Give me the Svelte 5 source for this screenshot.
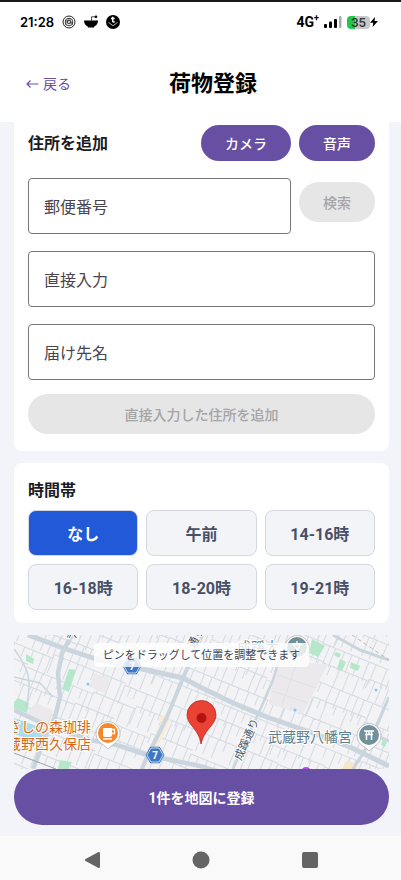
<script>
	const slots = ['なし', '午前', '14-16時', '16-18時', '18-20時', '19-21時'];

	let slot = $state('なし');
	let postcode = $state('');
	let address = $state('');
	let recipient = $state('');

	// side streets: rows across the map, blocks of parallel lanes between them
	function sideStreets() {
		let seed = 11;
		const rand = () => {
			seed = (seed * 16807) % 2147483647;
			return seed / 2147483647;
		};
		let d = '';
		for (let y = -170; y < 190; y += 19) {
			let x = -60;
			while (x < 450) {
				const block = 35 + rand() * 55;
				const top = y + Math.round(rand() * 6);
				d += `M${x.toFixed(1)} ${top}h${block.toFixed(1)}`;
				for (let lane = 0; lane < block; lane += 6 + rand() * 6) {
					const len = rand() > 0.2 ? 20 : 10;
					d += `M${(x + lane).toFixed(1)} ${top}v${len}`;
				}
				x += block;
			}
		}
		return d;
	}

	const streets = sideStreets();
</script>

<div class="screen">
	<div class="status">
		<div class="status__group">
			<span class="status__time">21:28</span>
			<svg width="14" height="14" viewBox="0 0 14 14" fill="none" stroke="#222">
				<circle cx="7" cy="7" r="6" />
				<circle cx="7" cy="7" r="3.8" stroke-width=".9" />
				<circle cx="7" cy="7" r="1.8" stroke-width=".9" />
				<path d="M3 10 7 3l4 7M3 5l8 4" stroke-width=".5" />
			</svg>
			<svg width="14" height="14" viewBox="0 0 14 14">
				<path d="M0 5.500h14c0 3.200-1.500 4.800-3.500 5.800l-.5 1.200H4l-.5-1.200C1.500 10.300 0 8.700 0 5.500Z" />
				<path d="M7.500 6V1.800h3.500" fill="none" stroke="#333" stroke-width=".9" />
				<circle cx="12" cy="1.800" r="1.300" />
			</svg>
			<svg width="14" height="14" viewBox="0 0 14 14">
				<circle cx="7" cy="7" r="7" />
				<path d="M6.700 1.800v4.200q0 1.200 2 .8M5 3.600h3.700" fill="none" stroke="#fff" stroke-width="1.500" />
				<path d="m2.500 7.500 4.500 3.200 4.500-3.200" fill="none" stroke="#fff" stroke-width=".7" />
			</svg>
		</div>
		<div class="status__group status__group--right">
			<span class="status__net">4G<sup>+</sup></span>
			<svg width="18" height="12" viewBox="0 0 18 12">
				<rect x="0" y="8" width="3" height="4" rx="1" />
				<rect x="5" y="5.500" width="3" height="6.500" rx="1" />
				<rect x="10" y="3" width="3" height="9" rx="1" />
				<rect x="15" y="0" width="2.500" height="12" rx="1" fill="#aaa" />
			</svg>
			<span class="battery">
				<span class="battery__level">35</span>
				<svg width="8" height="10" viewBox="0 0 8 10">
					<path d="M5 0 0 5.800h3.200L2.700 10 8 4H4.600Z" />
				</svg>
			</span>
		</div>
	</div>

	<header class="header">
		<button class="header__back" type="button">
			<svg width="13" height="10" viewBox="0 0 13 10" fill="none" stroke="currentColor" stroke-width="1.200">
				<path d="M12.500 5H1M4.500 1.500 1 5l3.500 3.500" />
			</svg>
			戻る
		</button>
		<h1>荷物登録</h1>
	</header>

	<main class="content">
		<section class="card card--address">
			<div class="card__head">
				<h2>住所を追加</h2>
				<button class="btn btn--camera" type="button">カメラ</button>
				<button class="btn btn--small" type="button">音声</button>
			</div>
			<div class="row">
				<input class="field" type="text" placeholder="郵便番号" aria-label="郵便番号" bind:value={postcode} />
				<button class="btn btn--small btn--search" type="button" disabled={!postcode}>検索</button>
			</div>
			<input class="field" type="text" placeholder="直接入力" aria-label="直接入力" bind:value={address} />
			<input class="field" type="text" placeholder="届け先名" aria-label="届け先名" bind:value={recipient} />
			<button class="btn btn--wide" type="button" disabled={!address}>直接入力した住所を追加</button>
		</section>

		<section class="card card--time">
			<h2>時間帯</h2>
			<div class="slots">
				{#each slots as name}
					<button
						class="slot"
						class:slot--active={slot === name}
						type="button"
						aria-pressed={slot === name}
						onclick={() => (slot = name)}>{name}</button
					>
				{/each}
			</div>
		</section>

		<section class="map">
			<svg class="map__canvas" viewBox="0 0 375 134" preserveAspectRatio="xMidYMid slice">
				<rect width="375" height="134" fill="#f3f2f4" />
				<path d={streets} transform="rotate(22)" fill="none" stroke="#d3dbe3" />

				<g fill="#ebe9eb">
					<path d="m262 27 52 2-25 50-34-10Z" />
					<path d="m21 68 18 7-6 13-22-7Z" />
					<path d="m80 38 17 6-6 14-16-6Z" />
				</g>
				<path d="m264 40 38 13M258 56l36 12M282 30l-14 40" fill="none" stroke="#dfe1e5" />
				<g fill="#b5e8ca">
					<path d="m12 19 8 5-1 5-7-3Z" />
					<path d="m55 34 7 1-7 22-7-3Z" />
					<path d="m4 63 11 5-2 10-13-5v-6Z" />
					<path d="m46 125 12 2-4 7H44Z" />
					<path d="m298 4 13 7-7 11-9-4Z" />
					<path d="m326 24 6 3-4 9-5-2Z" />
					<path d="m337 27 9 4-2 5-8-3Z" />
					<path d="m369 104 4 3-2 5-4-2Z" />
					<path d="m322 17 5 2-2 4-5-3Z" />
				</g>
				<path d="M153 82 139 114M146 83l8 3" fill="none" stroke="#f8ecd2" stroke-width="7" />
				<path d="m332 126 12 3-2 5h-14Z" fill="#f8e7c6" />
				<path d="m0 83 31 11-5 13L0 99Z" fill="#a6def0" />
				<g fill="#78cdf3">
					<circle cx="74" cy="49" r="1.500" />
					<circle cx="281" cy="75" r="1.500" />
					<circle cx="362" cy="55" r="1.500" />
				</g>

				<g fill="none" stroke="#cbd5dd" stroke-linejoin="round">
					<path d="M0 14q15 20 15 34T12 73M0 42l26 6 13 14M0 90l34 12" stroke-width="1.500" />
					<path d="m267 18-8 27-13 30-27 59" stroke-width="2.500" />
					<path d="m319 0 27 15 29 10M375 62l-22 50-14 22M346 94l29 12" stroke-width="3" />
					<path d="M58 0 48 18l-4 20 2 24-5 20-12 26-10 26" stroke-width="4.500" />
					<path d="m188 0-19 43-16 39-20 40-5 12" stroke-width="4" />
					<path d="m0 75 30 14 46 16 27 5 30 10 53 11 20 6" stroke-width="4.500" />
					<path d="m14 0 35 13 30 10 40 9 50 11 17 9 33 16 34 14 43 15 40 15 39 19" stroke-width="5" />
				</g>
				<path d="m0 118 42 16" stroke="#97a7b5" fill="none" />
				<path d="m338 0 37 25" stroke="#bbb" stroke-dasharray="4 3" fill="none" />

				<g class="map__road">
					<text transform="translate(227 126) rotate(-66)">成蹊通り</text>
					<text transform="translate(180 14) rotate(-62)">通り</text>
					<text x="52" y="2">沢</text>
				</g>

				{#each [[118, 31], [141, 120]] as [x, y]}
					<g transform="translate({x} {y})">
						<path d="M-4-7h8l4 7-4 7h-8l-4-7Z" fill="#3e77c4" stroke="#3e77c4" stroke-width="2.500" />
						<path d="M-4-7h8l4 7-4 7h-8l-4-7Z" fill="#3e77c4" stroke="#fff" stroke-width=".7" />
						<text y="4" text-anchor="middle" fill="#fff" font-size="10" font-weight="700">7</text>
					</g>
				{/each}

				<g class="map__shop">
					<text x="77" y="97" text-anchor="end">さしの森珈琲</text>
					<text x="77" y="114" text-anchor="end">蔵野西久保店</text>
				</g>
				<path d="M94 114q-3-3-6-5a12 12 0 1 1 12 0q-3 2-6 5Z" fill="#fff" stroke="#aaa" stroke-width=".7" />
				<circle cx="94" cy="98" r="10" fill="#f5882d" />
				<path d="M89 93h9v7q0 2-2 2h-5q-2 0-2-2Z" fill="#fff" />
				<path d="M98 94.500h2.500v4H98M89 104h9" fill="none" stroke="#fff" stroke-width="1.300" />

				<text class="map__shrine" x="338" y="107" text-anchor="end">武蔵野八幡宮</text>
				<path d="M355 116q-3-3-6-5a12 12 0 1 1 12 0q-3 2-6 5Z" fill="#fff" stroke="#aaa" stroke-width=".7" />
				<circle cx="355" cy="100" r="10" fill="#71909c" />
				<path d="M350 96h10M351 99.500h8M352.500 96v9M357.500 96v9M355 96v3" fill="none" stroke="#fff" stroke-width="1.500" />

				<text class="map__shrine" x="265" y="17" text-anchor="end">成蹊大</text>
				<path d="M283 28q-3-3-6-5a12 12 0 1 1 12 0q-3 2-6 5Z" fill="#fff" stroke="#aaa" stroke-width=".7" />
				<circle cx="283" cy="12" r="10" fill="#71909c" />
				<path d="M278 9h10M283 6v3M280 10q2 5 7 7M286 10q-2 5-7 7" fill="none" stroke="#fff" stroke-width="1.300" />
				<circle cx="292" cy="137" r="5" fill="#b34be0" />

				<path
					d="M187 109c-1-8-5-13-9-18-3-4-5-7-5-11a14.500 14.500 0 0 1 29 0c0 4-2 7-5 11-5 6-8 10-10 18Z"
					fill="#ea4335"
					stroke="#b9271c"
					stroke-width=".8"
				/>
				<circle cx="187.500" cy="83" r="5" fill="#b31412" />
			</svg>
			<p class="map__hint">ピンをドラッグして位置を調整できます</p>
		</section>

		<button class="btn btn--submit" type="button">1件を地図に登録</button>
	</main>

	<nav class="nav">
		<button type="button" aria-label="戻る">
			<svg width="18" height="18" viewBox="0 0 18 18">
				<path d="M15 2v14L2 9Z" stroke="#646464" stroke-width="2" stroke-linejoin="round" />
			</svg>
		</button>
		<button type="button" aria-label="ホーム">
			<svg width="18" height="18" viewBox="0 0 18 18"><circle cx="9" cy="9" r="8.500" /></svg>
		</button>
		<button type="button" aria-label="履歴">
			<svg width="18" height="18" viewBox="0 0 18 18"><rect x="1" y="1" width="16" height="16" rx="2" /></svg>
		</button>
	</nav>
</div>

<style>
	:global(body) {
		margin: 0;
		background: #f3f4f9;
	}
	.screen {
		--purple: #674fa3;
		display: flex;
		flex-direction: column;
		min-height: 100vh;
		font-family: Roboto, 'Noto Sans CJK JP', sans-serif;
		color: #1c1b1f;
	}
	button,
	input {
		box-sizing: border-box;
		margin: 0;
		font-family: inherit;
	}
	button {
		padding: 0;
		border: 0;
		cursor: pointer;
	}
	h1,
	h2,
	p {
		margin: 0;
	}
	h2 {
		padding-top: 2px;
		font-size: 16px;
		line-height: 24px;
		font-weight: 700;
	}

	.status {
		display: flex;
		justify-content: space-between;
		align-items: center;
		height: 40px;
		padding: 0 23px 0 20px;
		border-top: 2px solid #1b181b;
		background: #fff;
		color: #000;
	}
	.status__group {
		display: flex;
		align-items: center;
		gap: 8px;
	}
	.status__group--right {
		gap: 5px;
	}
	.status__time {
		font: 600 13px/20px Inter, sans-serif;
	}
	.status__net {
		font-size: 14px;
		line-height: 20px;
		font-weight: 700;
	}
	.status__net sup {
		font-size: 9px;
		line-height: 1;
	}
	.battery {
		display: flex;
		align-items: center;
	}
	.battery__level {
		width: 23px;
		border-radius: 4px;
		background: linear-gradient(90deg, #24c74b 36%, #c8c8c8 36%);
		font: 600 12px/13px Inter, sans-serif;
		text-align: center;
		color: #333;
	}

	.header {
		display: grid;
		box-sizing: border-box;
		grid-template-columns: 1fr auto 1fr;
		align-items: center;
		height: 80px;
		padding: 4px 1px 0 26px;
		background: #fff;
	}
	.header h1 {
		font-size: 22px;
		line-height: 32px;
		font-weight: 700;
		color: #000;
	}
	.header__back {
		display: flex;
		justify-self: start;
		align-items: center;
		gap: 4px;
		background: none;
		font-size: 14px;
		line-height: 20px;
		font-weight: 400;
		color: var(--purple);
	}

	.content {
		display: flex;
		flex: 1;
		flex-direction: column;
		padding: 0 12px 11px 14px;
	}
	.card {
		padding: 14px;
		margin-bottom: 12px;
		border-radius: 8px;
		background: #fff;
	}
	.card--address {
		display: flex;
		flex-direction: column;
		gap: 9px;
		padding: 3px 14px 17px;
		border-radius: 0 0 8px 8px;
	}
	.card--time {
		padding-bottom: 13px;
	}
	.card__head {
		display: flex;
		align-items: center;
		gap: 8px;
	}
	.card__head h2 {
		flex: 1;
	}
	.row {
		display: flex;
		align-items: center;
		gap: 8px;
	}
	.field {
		flex: none;
		width: 100%;
		height: 56px;
		margin-top: 8px;
		padding: 2px 15px 0;
		border: 1px solid #79747e;
		border-radius: 4px;
		background: #fff;
		font-size: 16px;
		color: #1c1b1f;
	}
	.field::placeholder {
		color: #49454f;
		opacity: 1;
	}
	.row .field {
		flex: 1;
		min-width: 0;
	}

	.btn {
		height: 36px;
		padding-top: 1px;
		border-radius: 28px;
		background: var(--purple);
		font-size: 14px;
		line-height: 20px;
		font-weight: 500;
		color: #fff;
	}
	.btn:disabled {
		background: #e6e6e6;
		color: #a5a4a6;
	}
	.btn--camera {
		width: 90px;
	}
	.btn--small {
		width: 76px;
	}
	.btn--search,
	.btn--wide {
		height: 40px;
	}
	.btn--wide {
		margin-top: 5px;
	}
	.btn--submit {
		height: 56px;
		font-weight: 700;
	}

	.slots {
		display: grid;
		grid-template-columns: repeat(3, 1fr);
		gap: 8px;
		margin-top: 7px;
	}
	.slot {
		height: 46px;
		padding-top: 3px;
		border: 1px solid #d4d7e1;
		border-radius: 8px;
		background: #f3f4f8;
		font-size: 16px;
		line-height: 24px;
		font-weight: 700;
		color: #475067;
	}
	.slot--active {
		background: #2159d8;
		color: #fff;
	}

	.map {
		display: flex;
		position: relative;
		flex: 1;
		justify-content: center;
		align-items: flex-start;
		min-height: 134px;
		overflow: hidden;
	}
	.map__canvas {
		position: absolute;
		inset: 0;
		width: 100%;
		height: 100%;
	}
	.map__hint {
		position: relative;
		margin-top: 8px;
		padding: 3px 9px 1px;
		border-radius: 4px;
		background: rgba(255, 255, 255, 0.8);
		font-size: 11px;
		line-height: 20px;
		color: #3b4356;
	}
	.map__road,
	.map__shop,
	.map__shrine {
		paint-order: stroke;
		stroke: #fff;
		stroke-width: 2px;
	}
	.map__road {
		font-size: 11px;
		fill: #4a5560;
	}
	.map__shop {
		font-size: 14px;
		fill: #d9660f;
	}
	.map__shrine {
		font-size: 14px;
		fill: #60808c;
	}

	.nav {
		display: flex;
		box-sizing: border-box;
		justify-content: space-around;
		align-items: center;
		height: 44px;
		padding: 4px 37px 0 39px;
		background: #f9f9f9;
	}
	.nav button {
		display: flex;
		padding: 4px;
		background: none;
		fill: #646464;
	}
	.nav svg {
		overflow: visible;
	}
</style>
